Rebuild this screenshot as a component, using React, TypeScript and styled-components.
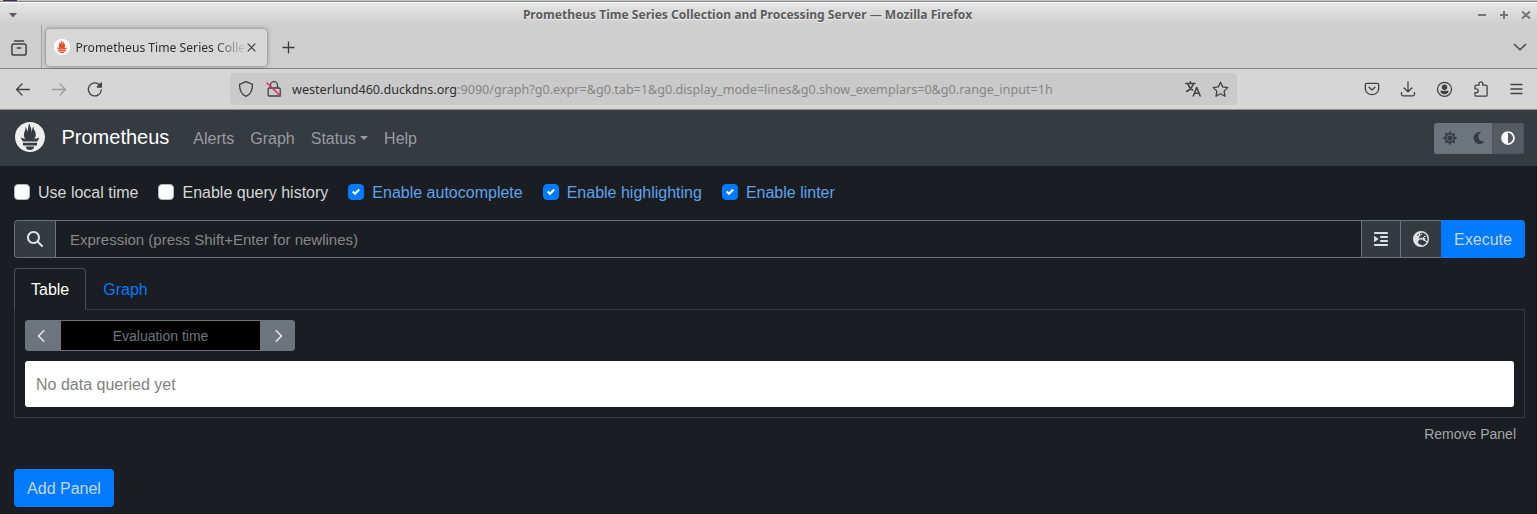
import React from 'react';
import styled, { createGlobalStyle } from 'styled-components';
import { SiPrometheus } from 'react-icons/si';
import { FaSun, FaMoon, FaAdjust } from 'react-icons/fa';
import { FaMagnifyingGlass, FaIndent, FaEarthEurope, FaChevronLeft, FaChevronRight } from 'react-icons/fa6';

const Global = createGlobalStyle`
  * { box-sizing: border-box; }
  body { margin: 0; background: #1a1d21; overflow: hidden; }
`;

const Window = styled.div`
  width: 1537px;
  height: 514px;
  display: flex;
  flex-direction: column;
  background: #1a1d21;
  font-family: 'Liberation Sans', Arial, sans-serif;
  font-size: 16px;
  line-height: 24px;
  white-space: nowrap;
`;

/* Browser chrome */
const Desktop = styled.div`
  height: 1px;
  background: linear-gradient(90deg, #e3cfae 0 3px, #3d2a5c 3px 17px, #c3c3c1 17px);
`;
const TitleBar = styled.div`
  height: 24px;
  flex: none;
  border-top: 1px solid #858585;
  box-shadow: inset 0 1px #fdfdfd;
  background: linear-gradient(#e6e6e6, #cecece);
  display: grid;
  grid-template-columns: 80px 1fr 80px;
  align-items: center;
  color: #5c5c5c;
  font: bold 12.05px/22px 'Noto Sans', sans-serif;
`;
const WindowTitle = styled.div`
  text-align: center;
  padding: 2px 42px 0 0;
  text-shadow: 0 1px #efefef;
`;
const MenuArrow = styled.svg`
  margin: 1px 0 0 9px;
`;
const WindowControls = styled.svg`
  justify-self: end;
  margin-top: 1px;
`;
const TabStrip = styled.div`
  height: 44px;
  flex: none;
  background: #cecece;
  border-bottom: 1px solid #808080;
  display: flex;
  align-items: center;
`;
const RecentView = styled.div`
  width: 42px;
  height: 43px;
  border-right: 1px solid #a3a3a3;
  padding: 14px 0 0 11px;
`;
const BrowserTab = styled.div`
  width: 221px;
  height: 37px;
  margin: 1px 0 0 4px;
  border-radius: 4px;
  background: #d7d7d7;
  box-shadow: 0 0 4px rgba(0, 0, 0, 0.45);
  display: flex;
  align-items: center;
  padding: 0 11px 0 8px;
`;
const Favicon = styled.div`
  width: 16px;
  height: 16px;
  border-radius: 50%;
  background: radial-gradient(circle, #e6522c 6px, #fff 6.500px);
  display: flex;
  svg { display: block; }
`;
const TabTitle = styled.div`
  width: 168px;
  margin: 2px 0 0 5.5px;
  color: #2e2e2e;
  font: 12.15px/20px 'Noto Sans', sans-serif;
  mask-image: linear-gradient(90deg, #000 138px, transparent 172px);
`;
const TabClose = styled.svg`
  margin-left: 3px;
  flex: none;
`;
const NewTab = styled.svg`
  margin-left: 15px;
  margin-top: 1px;
`;
const TabList = styled.svg`
  margin-left: auto;
  margin-right: 10px;
`;
const Toolbar = styled.div`
  height: 41px;
  flex: none;
  background: #d6d6d6;
  border-bottom: 1px solid #929292;
  display: flex;
  align-items: center;
  padding: 0 12px 0 15px;
`;
const ToolGroup = styled.div<{ $gap: number }>`
  display: flex;
  gap: ${p => p.$gap}px;
  svg { display: block; }
`;
const UrlBar = styled.div`
  width: 1007px;
  height: 32px;
  margin: 0 auto 0 126px;
  border-radius: 4px;
  background: #cacaca;
  display: flex;
  align-items: center;
  padding: 0 8px 0 7px;
`;
const Url = styled.div`
  flex: 1;
  margin-left: 9px;
  padding-top: 1px;
  color: #858585;
  font: 12.6px/20px 'Noto Sans', sans-serif;
  b { font-weight: 400; color: #303030; }
`;
const Glyph = styled.svg`
  fill: none;
  stroke: #414141;
  stroke-width: 1.3;
  stroke-linecap: round;
  stroke-linejoin: round;
`;

/* Application */
const Navbar = styled.nav`
  height: 56px;
  flex: none;
  background: #363a41;
  display: flex;
  align-items: center;
  padding: 0 13px 0 15px;
`;
const Brand = styled.div`
  display: flex;
  align-items: center;
  gap: 16.5px;
  color: #fff;
  font-size: 20px;
  line-height: 30px;
  margin-right: 16px;
  padding-bottom: 2px;
  svg { color: #eee; }
`;
const NavLink = styled.a<{ $menu?: boolean }>`
  padding: 2px 8px 0;
  color: #999ca0;
  &::after {
    content: '';
    display: ${p => (p.$menu ? 'inline-block' : 'none')};
    margin-left: 4px;
    vertical-align: 4px;
    border: 4.8px solid transparent;
    border-top-color: currentColor;
    border-bottom: 0;
  }
`;
const ThemeSwitch = styled.div`
  display: flex;
  margin-left: auto;
  border-radius: 3px;
  overflow: hidden;
  background: #6c757d;
`;
const ThemeButton = styled.div<{ $active?: boolean; $width: number }>`
  width: ${p => p.$width}px;
  height: 31px;
  display: flex;
  align-items: center;
  justify-content: center;
  color: ${p => (p.$active ? '#fff' : '#343a40')};
  background: ${p => (p.$active ? '#545b62' : 'transparent')};
  border: ${p => (p.$active ? '1px solid #4e555b' : '0')};
  border-radius: ${p => (p.$active ? '0 3px 3px 0' : '0')};
`;
const Page = styled.main`
  flex: 1;
  padding: 14px 11px 0 14px;
  border-right: 1px solid #111315;
  border-bottom: 1px solid #131518;
`;
const Options = styled.div`
  display: flex;
  gap: 20px;
  height: 24px;
`;
const Option = styled.label<{ $on?: boolean }>`
  display: flex;
  align-items: center;
  gap: 8px;
  line-height: 26px;
  color: ${p => (p.$on ? '#5ea2ee' : '#d5d7d9')};
`;
const Box = styled.span<{ $on?: boolean }>`
  width: 16px;
  height: 16px;
  border-radius: 4px;
  border: 1px solid ${p => (p.$on ? '#007bff' : '#adb5bd')};
  background: ${p => (p.$on ? '#007bff' : '#fff')};
  display: flex;
  align-items: center;
  justify-content: center;
`;
const OptionText = styled.span`
  padding-top: 2px;
`;
const ExpressionRow = styled.div`
  display: flex;
  height: 38px;
  margin-top: 16px;
  border: 1px solid #6c757d;
  border-right: 0;
  border-radius: 4px;
`;
const Addon = styled.div<{ $width: number; $side: 'left' | 'right' }>`
  width: ${p => p.$width}px;
  background: #343a40;
  color: #dee2e6;
  display: flex;
  align-items: center;
  justify-content: center;
  border-${p => (p.$side === 'left' ? 'right' : 'left')}: 1px solid #6c757d;
  border-radius: ${p => (p.$side === 'left' ? '3px 0 0 3px' : '0')};
`;
const Expression = styled.div`
  flex: 1;
  padding: 7px 14px;
  color: #888;
  font-size: 15px;
`;
const Button = styled.div<{ $width: number }>`
  width: ${p => p.$width}px;
  height: 38px;
  background: #007bff;
  color: #c6d6e6;
  text-align: center;
  line-height: 40px;
  border-radius: 4px;
`;
const Execute = styled(Button)`
  margin: -1px 0;
  border-radius: 0 4px 4px 0;
`;
const Tabs = styled.div`
  display: flex;
  margin-top: 10px;
  height: 42px;
  border-bottom: 1px solid #343a40;
`;
const Tab = styled.div<{ $active?: boolean }>`
  height: 42px;
  padding: 9px 16px 7px;
  border: 1px solid ${p => (p.$active ? '#495057' : 'transparent')};
  border-bottom-color: ${p => (p.$active ? '#1a1d21' : 'transparent')};
  border-radius: 4px 4px 0 0;
  color: ${p => (p.$active ? '#fff' : '#007bff')};
`;
const TabPane = styled.div`
  height: 108px;
  padding: 10px;
  border: 1px solid #343a40;
  border-top: 0;
`;
const TimeInput = styled.div`
  width: 270px;
  height: 31px;
  display: flex;
  border: 1px solid #6c757d;
  border-radius: 3px;
  background: #6c757d;
  color: #dee2e6;
`;
const TimeStep = styled.div<{ $side: 'left' | 'right' }>`
  width: ${p => (p.$side === 'left' ? 35 : 34)}px;
  padding: ${p => (p.$side === 'left' ? '0 3px 0 0' : '0 0 0 2px')};
  display: flex;
  align-items: center;
  justify-content: center;
`;
const Time = styled.div`
  flex: 1;
  background: #000;
  color: #6c757d;
  font-size: 14px;
  line-height: 30px;
  text-align: center;
`;
const Notice = styled.div`
  height: 46px;
  margin-top: 10px;
  padding: 12px 11px 10px;
  background: #fff;
  border-radius: 3px;
  color: #818182;
`;
const RemovePanel = styled.div`
  margin: 4px 9px 0 0;
  text-align: right;
  font-size: 14px;
  color: #a4a6a8;
`;
const AddPanel = styled(Button)`
  margin-top: 23px;
`;

const Check = () => (
  <svg width="8" height="8" viewBox="0 0 8 8">
    <path fill="#fff" d="M6.564.75l-3.59 3.612-1.538-1.55L0 4.26l2.974 2.99L8 2.193z" />
  </svg>
);

const options = [
  { label: 'Use local time', on: false },
  { label: 'Enable query history', on: false },
  { label: 'Enable autocomplete', on: true },
  { label: 'Enable highlighting', on: true },
  { label: 'Enable linter', on: true },
];

export default function App() {
  return (
    <Window>
      <Global />
      <Desktop />
      <TitleBar>
        <MenuArrow width="9" height="6"><path d="M0 1h8L4 5.5z" fill="#5c5c5c" /></MenuArrow>
        <WindowTitle>Prometheus Time Series Collection and Processing Server — Mozilla Firefox</WindowTitle>
        <WindowControls width="62" height="12" fill="none" stroke="#757575" strokeWidth="2">
          <path d="M3 6h8M25 6h8M29 2v8M47 2.500l8 7M55 2.500l-8 7" />
        </WindowControls>
      </TitleBar>
      <TabStrip>
        <RecentView>
          <Glyph width="16" height="16">
            <g strokeWidth="1.500">
              <path d="M3.500 1h9" />
              <rect x="0.900" y="4" width="14.200" height="11" rx="1.800" />
              <path d="M6.300 8h3.400" />
            </g>
          </Glyph>
        </RecentView>
        <BrowserTab>
          <Favicon><SiPrometheus size={16} color="#fff" /></Favicon>
          <TabTitle>Prometheus Time Series Colle</TabTitle>
          <TabClose width="9" height="9" stroke="#3c3c3c" strokeWidth="1.2"><path d="M.7.7l7.600 7.600M8.300.7L.7 8.300" /></TabClose>
        </BrowserTab>
        <NewTab width="13" height="13" stroke="#3c3c3c" strokeWidth="1.3"><path d="M6.500.5v12M.5 6.500h12" /></NewTab>
        <TabList width="14" height="8" fill="none" stroke="#414141" strokeWidth="1.4"><path d="M1 1l6 5.800L13 1" /></TabList>
      </TabStrip>
      <Toolbar>
        <ToolGroup $gap={20}>
          <Glyph width="16" height="16"><path d="M14.500 8.500H1.500M7 3L1.500 8.500 7 14" /></Glyph>
          <Glyph width="16" height="16" opacity="0.4"><path d="M1.500 8.500h13M9 3l5.500 5.500L9 14" /></Glyph>
          <Glyph width="17" height="16"><path d="M12.600 4A6.500 6.500 0 1 0 14.300 9" /><path d="M14.300 2v4h-4z" fill="#414141" /></Glyph>
        </ToolGroup>
        <UrlBar>
          <ToolGroup $gap={11}>
            <Glyph width="18" height="18"><path d="M9 1.600l6.500 2.800c0 5-1 9.500-6.500 12-5.500-2.500-6.500-7-6.500-12z" /></Glyph>
            <Glyph width="17" height="18">
              <path d="M4.500 8V5.200a3.500 3.500 0 0 1 7 0V8M3.300 8h9.700a1.200 1.200 0 0 1 1.200 1.200v5.600a1.200 1.200 0 0 1-1.200 1.200H3.300a1.200 1.200 0 0 1-1.200-1.200V9.200A1.200 1.200 0 0 1 3.300 8z" />
              <path d="M1 3l13.500 13" stroke="#e22850" strokeWidth="1.500" />
            </Glyph>
          </ToolGroup>
          <Url><b>westerlund460.duckdns.org</b>:9090/graph?g0.expr=&amp;g0.tab=1&amp;g0.display_mode=lines&amp;g0.show_exemplars=0&amp;g0.range_input=1h</Url>
          <ToolGroup $gap={11}>
            <Glyph width="17" height="17"><path strokeWidth="1.500" d="M1.800 2.500H11M6.500 .8v1.700M9.300 2.500C8.500 6 6 8.800 2.500 10.500M3.800 2.500C5 6.500 7 8.200 8.500 9M9.300 15l3.400-8.500L16.200 15M10.500 12.300h4.600" /></Glyph>
            <Glyph width="17" height="17"><path d="M8.500 1.200l2.200 4.700 5.100.7-3.700 3.500.9 5.200-4.500-2.500L4 15.300l.9-5.200L1.200 6.600l5.100-.7z" /></Glyph>
          </ToolGroup>
        </UrlBar>
        <ToolGroup $gap={20}>
          <Glyph width="16" height="16"><path d="M3 2.300h10a1.700 1.700 0 0 1 1.700 1.700v3.500a6.700 6.200 0 0 1-13.400 0V4A1.700 1.700 0 0 1 3 2.300z" /><path d="M5 6.300l3 2.800 3-2.800" /></Glyph>
          <Glyph width="16" height="16"><path d="M8 1v9.500M4 7l4 3.700L12 7M1.500 11.500v1.800a1.500 1.500 0 0 0 1.500 1.500h10a1.500 1.500 0 0 0 1.500-1.500v-1.800" /></Glyph>
          <Glyph width="17" height="16"><circle cx="8.500" cy="8.300" r="7" /><circle cx="8.500" cy="6.200" r="2.100" fill="#414141" /><path d="M5 10.300h7c-.5 1.600-1.800 2.300-3.500 2.300s-3-.7-3.500-2.300z" fill="#414141" /></Glyph>
          <Glyph width="16" height="16"><path d="M2 5.500A1.300 1.300 0 0 1 3.300 4.200H6V2.800a1.900 1.900 0 0 1 3.800 0v1.400h3a1.300 1.300 0 0 1 1.300 1.300V14a1.200 1.200 0 0 1-1.200 1.200H3.300A1.300 1.300 0 0 1 2 13.900v-2.200h1.300a1.900 1.900 0 0 0 0-3.800H2z" /></Glyph>
          <Glyph width="16" height="16"><path d="M2 3.500h11M2 8h11M2 12.500h11" /></Glyph>
        </ToolGroup>
      </Toolbar>

      <Navbar>
        <Brand><SiPrometheus size={30} />Prometheus</Brand>
        <NavLink>Alerts</NavLink>
        <NavLink>Graph</NavLink>
        <NavLink $menu>Status</NavLink>
        <NavLink>Help</NavLink>
        <ThemeSwitch>
          <ThemeButton $width={32}><FaSun size={14} /></ThemeButton>
          <ThemeButton $width={26}><FaMoon size={12} /></ThemeButton>
          <ThemeButton $width={32} $active><FaAdjust size={14} /></ThemeButton>
        </ThemeSwitch>
      </Navbar>

      <Page>
        <Options>
          {options.map(o => (
            <Option key={o.label} $on={o.on}><Box $on={o.on}>{o.on && <Check />}</Box><OptionText>{o.label}</OptionText></Option>
          ))}
        </Options>
        <ExpressionRow>
          <Addon $width={41} $side="left"><FaMagnifyingGlass size={16} /></Addon>
          <Expression>Expression (press Shift+Enter for newlines)</Expression>
          <Addon $width={39} $side="right"><FaIndent size={16} /></Addon>
          <Addon $width={41} $side="right"><FaEarthEurope size={16} /></Addon>
          <Execute $width={84}>Execute</Execute>
        </ExpressionRow>
        <Tabs>
          <Tab $active>Table</Tab>
          <Tab>Graph</Tab>
        </Tabs>
        <TabPane>
          <TimeInput>
            <TimeStep $side="left"><FaChevronLeft size={14} /></TimeStep>
            <Time>Evaluation time</Time>
            <TimeStep $side="right"><FaChevronRight size={14} /></TimeStep>
          </TimeInput>
          <Notice>No data queried yet</Notice>
        </TabPane>
        <RemovePanel>Remove Panel</RemovePanel>
        <AddPanel $width={100}>Add Panel</AddPanel>
      </Page>
    </Window>
  );
}
